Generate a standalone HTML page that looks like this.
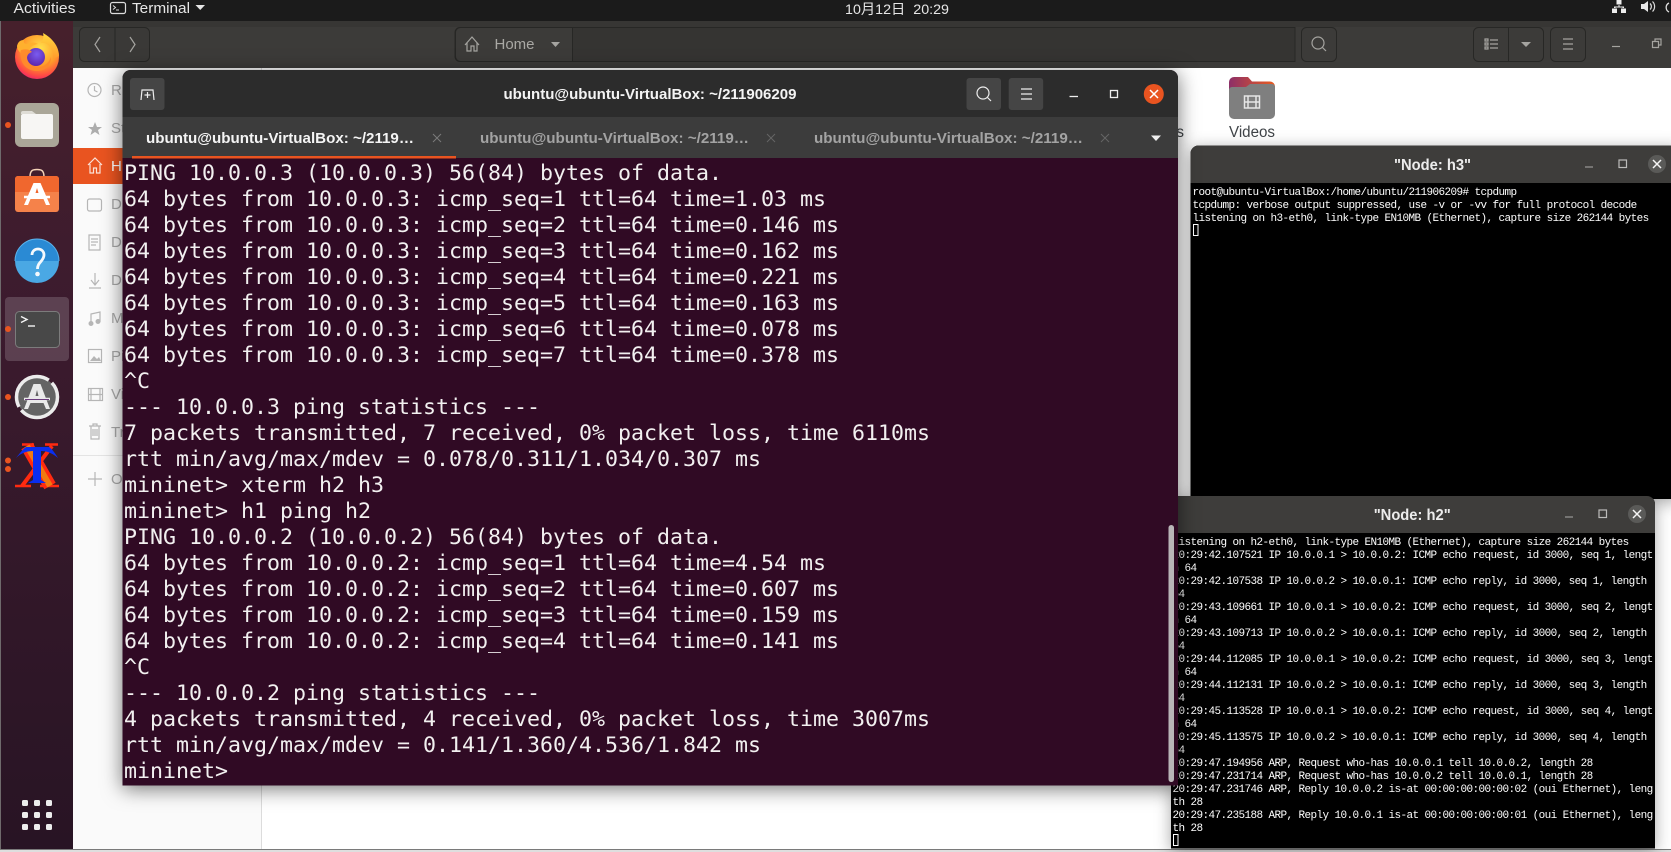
<!DOCTYPE html>
<html>
<head>
<meta charset="utf-8">
<style>
html,body{margin:0;padding:0;width:1671px;height:852px;overflow:hidden;background:#fff}
svg{display:block;position:absolute;left:0;top:0}
text{white-space:pre}
.ui{font-family:"Liberation Sans","Noto Sans CJK SC",sans-serif}
.tm{font-family:"DejaVu Sans Mono",monospace;font-size:21.6px;fill:#f2f0f0}
.xt{font-family:"Liberation Mono",monospace;font-size:11px;letter-spacing:-.6px;fill:#fff}
.side{font-size:15px;fill:#a8a8a8}
</style>
</head>
<body>
<svg width="1671" height="852" viewBox="0 0 1671 852" xmlns="http://www.w3.org/2000/svg">
<defs>
<linearGradient id="dock" x1="0" y1="0" x2="0" y2="1"><stop offset="0" stop-color="#46202c"/><stop offset=".35" stop-color="#3c1b2e"/><stop offset="1" stop-color="#281424"/></linearGradient>
<radialGradient id="ff" cx=".58" cy=".3" r=".8"><stop offset="0" stop-color="#ffe04a"/><stop offset=".5" stop-color="#ff9a2a"/><stop offset=".78" stop-color="#ff4a44"/><stop offset="1" stop-color="#e3127f"/></radialGradient>
<linearGradient id="fl" x1="0" y1="0" x2="0" y2="1"><stop offset="0" stop-color="#ffd83f"/><stop offset="1" stop-color="#ff9a2c"/></linearGradient>
<radialGradient id="pu" cx=".55" cy=".35" r=".7"><stop offset="0" stop-color="#7a5cf0"/><stop offset="1" stop-color="#5b23a8"/></radialGradient>
<linearGradient id="vf" x1="0" y1="0" x2="1" y2="0"><stop offset="0" stop-color="#8c2f68"/><stop offset="1" stop-color="#e95c20"/></linearGradient>
</defs>

<!-- files window base -->
<rect x="0" y="0" width="1671" height="852" fill="#fff"/>
<rect x="73" y="68" width="189" height="781" fill="#fafafa"/>
<rect x="261" y="68" width="1" height="781" fill="#dcdcdc"/>
<rect x="0" y="21" width="1671" height="47" fill="#3c3b39"/>
<rect x="0" y="21" width="1671" height="6" fill="#373634"/>
<rect x="0" y="849" width="1671" height="1" fill="#7a7a7a"/>
<rect x="0" y="850" width="1671" height="2" fill="#dedede"/>

<!-- toolbar -->
<g fill="none" stroke="#272725" stroke-width="1">
<rect x="79.5" y="27.5" width="70" height="34" rx="5" fill="#3a3937"/>
<path d="M115 28V61"/>
<path d="M460 27.5H1295V61.5H460a5 5 0 0 1-5-5V32.5a5 5 0 0 1 5-5z" fill="#353432"/>
<path d="M455.5 32.5a5 5 0 0 1 5-5H572.5V61.5H460.5a5 5 0 0 1-5-5z" fill="#3c3b39"/>
<rect x="1301.5" y="27.5" width="35" height="34" rx="5" fill="#3c3b39"/>
<rect x="1473.5" y="27.5" width="70" height="34" rx="5" fill="#3c3b39"/>
<path d="M1508.5 28V61"/>
<rect x="1550.5" y="27.5" width="35" height="34" rx="5" fill="#3c3b39"/>
</g>
<g fill="none" stroke="#a5a4a0" stroke-width="1.2">
<path d="M100 37L95 44.5L100 52"/><path d="M130 37L135 44.5L130 52"/>
<path d="M465 45L472 37L479 45M467 43V51H471V46H474V51H477V43"/>
<circle cx="1318" cy="43" r="6"/><path d="M1322.5 47.5L1326 51"/>
<path d="M1490 40H1498M1490 44H1498M1490 48H1498M1485 39h3v2h-3zM1485 43h3v2h-3zM1485 47h3v2h-3z"/>
<path d="M1563 39H1573M1563 44H1573M1563 49H1573"/>
<path d="M1612 46.5H1620"/>
<path d="M1652.5 41.5h6v6h-6zM1655 41.5v-2.5h6v6h-2.500"/>
</g>
<path d="M551 42H560L555.500 47z" fill="#a5a4a0"/>
<path d="M1521 42H1531L1526 47z" fill="#a5a4a0"/>
<text class="ui" x="494.500" y="49" font-size="15" fill="#a9a8a4" textLength="40" lengthAdjust="spacingAndGlyphs">Home</text>

<!-- sidebar -->
<rect x="73" y="148" width="60" height="36" fill="#e95420"/>
<g fill="none" stroke="#b6b6b6" stroke-width="1.200">
<circle cx="94.500" cy="90" r="6.500"/><path d="M94.500 86V90.500L97.500 92"/>
<path d="M88 204a2 2 0 0 1 2-2H100a2 2 0 0 1 2 2V212a2 2 0 0 1-2 2H90a2 2 0 0 1-2-2z" transform="translate(-.5 -3)"/>
<path d="M89 235H100V250H89zM91 239H98M91 242H98M91 245H96"/>
<path d="M95 273V285M91 280L95 285L99 280M89 288H101"/>
<path d="M91 324V314L100 312V322"/>
<rect x="88.500" y="349.500" width="13" height="13"/>
<rect x="88.500" y="388.500" width="14" height="12"/><path d="M91 389V400M100 389V400M88 394.500H103"/>
<path d="M89 426H101M91 426V439H99V426M93 426V424H97V426M93 429V436M95 429V436M97 429V436"/>
<path d="M95 472V486M88 479H102"/>
</g>
<path d="M95 122L97 127H102L98 130L99.500 135L95 132L90.500 135L92 130L88 127H93z" fill="#adadad"/>
<circle cx="91" cy="323.500" r="2.500" fill="#b6b6b6"/><circle cx="98" cy="321.500" r="2.500" fill="#b6b6b6"/>
<path d="M90 361L94 356L97 359L99 357L101 361z" fill="#b6b6b6"/>
<path d="M88 165L95 158L102 165M90 164V173H93.500V168H96.500V173H100V164" fill="none" stroke="#fbe2d8" stroke-width="1.200"/>
<rect x="73" y="455" width="189" height="1" fill="#e4e4e4"/>
<g class="ui side">
<text x="111" y="95">Recent</text>
<text x="111" y="133">Starred</text>
<text x="111" y="171" style="fill:#fff">Home</text>
<text x="111" y="209">Desktop</text>
<text x="111" y="247">Documents</text>
<text x="111" y="285">Downloads</text>
<text x="111" y="323">Music</text>
<text x="111" y="361">Pictures</text>
<text x="111" y="399">Videos</text>
<text x="111" y="437">Trash</text>
<text x="111" y="484">Other Locations</text>
</g>

<!-- videos folder -->
<path d="M1229 82a5 5 0 0 1 5-5H1248l4 4.500H1270a5 5 0 0 1 5 5V100H1229z" fill="url(#vf)"/>
<path d="M1229 90a3 3 0 0 1 3-3H1246l4-3H1272a3 3 0 0 1 3 3V114a5 5 0 0 1-5 5H1234a5 5 0 0 1-5-5z" fill="#7f7f7f"/>
<g fill="none" stroke="#e6e6e6" stroke-width="1.500"><rect x="1244.500" y="96" width="15" height="12"/><path d="M1248 96V108M1256 96V108M1244 102H1260"/></g>
<text class="ui" x="1229" y="137" font-size="15.500" fill="#3f4347" textLength="46" lengthAdjust="spacingAndGlyphs">Videos</text>
<text class="ui" x="1184" y="137" font-size="15.500" fill="#3f4347" text-anchor="end">Pictures</text>

<!-- top bar -->
<rect x="0" y="0" width="1671" height="21" fill="#1b1b1b"/>
<g class="ui" font-size="15" fill="#e6e6e6">
<text x="13.500" y="13" textLength="62" lengthAdjust="spacingAndGlyphs">Activities</text>
<text x="132" y="13" textLength="58" lengthAdjust="spacingAndGlyphs">Terminal</text>
<text x="845" y="14" font-size="14" textLength="104" lengthAdjust="spacingAndGlyphs">10月12日  20:29</text>
</g>
<rect x="110.500" y="2.500" width="15" height="11" rx="2" fill="none" stroke="#ddd" stroke-width="1.200"/>
<path d="M113 5.500L115.500 7.500L113 9.500M116 10H119" fill="none" stroke="#ddd"/>
<path d="M195.500 5H205L200.250 10z" fill="#e6e6e6"/>
<path d="M1616.500 0H1621.500V4.500H1616.500zM1612 8.500H1617V13H1612zM1621 8.500H1626V13H1621zM1618.500 4V6.500H1614V9H1615.500V7.500H1622.500V9H1624V6.500H1619.500V4z" fill="#eee"/>
<path d="M1641 4H1644L1648 1V12L1644 9H1641z" fill="#e8e8e8"/>
<path d="M1650 3.500a4 4 0 0 1 0 6M1652.500 1.500a7 7 0 0 1 0 10" fill="none" stroke="#ddd" stroke-width="1.200"/>
<path d="M1669 3a5 5 0 0 0 0 9" fill="none" stroke="#ddd" stroke-width="1.300"/>

<!-- node h3 -->
<g style="filter:drop-shadow(0 3px 8px rgba(0,0,0,.35))">
<path d="M1190.500 499V153.500a8 8 0 0 1 8-8H1680V499z" fill="#000"/>
<path d="M1190.500 183V153.500a8 8 0 0 1 8-8H1680V183z" fill="#3e3d3b"/>
</g>
<text class="ui" x="1394" y="170" font-size="16" font-weight="bold" fill="#ececec" textLength="77" lengthAdjust="spacingAndGlyphs">"Node: h3"</text>
<path d="M1585 167H1593" stroke="#9a9a98" stroke-width="1.200"/>
<rect x="1619" y="160" width="7.500" height="7.500" fill="none" stroke="#bcbcba" stroke-width="1.200"/>
<circle cx="1657" cy="164" r="9" fill="#5a5a58"/>
<path d="M1653 160L1661 168M1661 160L1653 168" stroke="#f5f5f5" stroke-width="1.500"/>
<g class="xt">
<text x="1192.500" y="195">root@ubuntu-VirtualBox:/home/ubuntu/211906209# tcpdump</text>
<text x="1192.500" y="208">tcpdump: verbose output suppressed, use -v or -vv for full protocol decode</text>
<text x="1192.500" y="221">listening on h3-eth0, link-type EN10MB (Ethernet), capture size 262144 bytes</text>
</g>
<rect x="1193.500" y="224.500" width="4.500" height="11" fill="none" stroke="#fff"/>

<!-- node h2 -->
<g style="filter:drop-shadow(0 3px 8px rgba(0,0,0,.35))">
<path d="M1171 848.500V504a8 8 0 0 1 8-8H1647a8 8 0 0 1 8 8V848.500z" fill="#000"/>
<path d="M1171 533V504a8 8 0 0 1 8-8H1647a8 8 0 0 1 8 8V533z" fill="#3e3d3b"/>
</g>
<text class="ui" x="1373.700" y="520" font-size="16" font-weight="bold" fill="#ececec" textLength="77" lengthAdjust="spacingAndGlyphs">"Node: h2"</text>
<path d="M1565 517H1573" stroke="#9a9a98" stroke-width="1.200"/>
<rect x="1599" y="510" width="7.500" height="7.500" fill="none" stroke="#bcbcba" stroke-width="1.200"/>
<circle cx="1637" cy="514" r="9" fill="#5a5a58"/>
<path d="M1633 510L1641 518M1641 510L1633 518" stroke="#f5f5f5" stroke-width="1.500"/>
<g class="xt">
<text x="1172.500" y="545">listening on h2-eth0, link-type EN10MB (Ethernet), capture size 262144 bytes</text>
<text x="1172.500" y="558">20:29:42.107521 IP 10.0.0.1 &gt; 10.0.0.2: ICMP echo request, id 3000, seq 1, lengt</text>
<text x="1172.500" y="571">h 64</text>
<text x="1172.500" y="584">20:29:42.107538 IP 10.0.0.2 &gt; 10.0.0.1: ICMP echo reply, id 3000, seq 1, length</text>
<text x="1172.500" y="597">64</text>
<text x="1172.500" y="610">20:29:43.109661 IP 10.0.0.1 &gt; 10.0.0.2: ICMP echo request, id 3000, seq 2, lengt</text>
<text x="1172.500" y="623">h 64</text>
<text x="1172.500" y="636">20:29:43.109713 IP 10.0.0.2 &gt; 10.0.0.1: ICMP echo reply, id 3000, seq 2, length</text>
<text x="1172.500" y="649">64</text>
<text x="1172.500" y="662">20:29:44.112085 IP 10.0.0.1 &gt; 10.0.0.2: ICMP echo request, id 3000, seq 3, lengt</text>
<text x="1172.500" y="675">h 64</text>
<text x="1172.500" y="688">20:29:44.112131 IP 10.0.0.2 &gt; 10.0.0.1: ICMP echo reply, id 3000, seq 3, length</text>
<text x="1172.500" y="701">64</text>
<text x="1172.500" y="714">20:29:45.113528 IP 10.0.0.1 &gt; 10.0.0.2: ICMP echo request, id 3000, seq 4, lengt</text>
<text x="1172.500" y="727">h 64</text>
<text x="1172.500" y="740">20:29:45.113575 IP 10.0.0.2 &gt; 10.0.0.1: ICMP echo reply, id 3000, seq 4, length</text>
<text x="1172.500" y="753">64</text>
<text x="1172.500" y="766">20:29:47.194956 ARP, Request who-has 10.0.0.1 tell 10.0.0.2, length 28</text>
<text x="1172.500" y="779">20:29:47.231714 ARP, Request who-has 10.0.0.2 tell 10.0.0.1, length 28</text>
<text x="1172.500" y="792">20:29:47.231746 ARP, Reply 10.0.0.2 is-at 00:00:00:00:00:02 (oui Ethernet), leng</text>
<text x="1172.500" y="805">th 28</text>
<text x="1172.500" y="818">20:29:47.235188 ARP, Reply 10.0.0.1 is-at 00:00:00:00:00:01 (oui Ethernet), leng</text>
<text x="1172.500" y="831">th 28</text>
</g>
<rect x="1173.500" y="834.500" width="4.500" height="11" fill="none" stroke="#fff"/>

<!-- main terminal -->
<g style="filter:drop-shadow(0 3px 10px rgba(0,0,0,.55))">
<path d="M122.500 785.500V78a8 8 0 0 1 8-8H1170a8 8 0 0 1 8 8V785.500z" fill="#300a24"/>
</g>
<path d="M122.500 117V78a8 8 0 0 1 8-8H1170a8 8 0 0 1 8 8V117z" fill="#2c2c2c"/>
<rect x="122.500" y="117" width="1055.500" height="41" fill="#3c3c3c"/>
<rect x="132" y="156" width="324" height="2.500" fill="#e95420"/>
<rect x="130" y="78" width="34.500" height="32" rx="3" fill="#454545"/>
<path d="M141 100L142 90H153L154 100M147.500 92V98M144.500 95H150.500" fill="none" stroke="#eee" stroke-width="1.200"/>
<rect x="966.500" y="78" width="34.500" height="32" rx="3" fill="#454545"/>
<circle cx="983" cy="93" r="6" fill="none" stroke="#eee" stroke-width="1.200"/><path d="M987.500 97.500L991 101" stroke="#eee" stroke-width="1.200"/>
<rect x="1008.700" y="78" width="34.500" height="32" rx="3" fill="#454545"/>
<path d="M1021 89H1032M1021 94H1032M1021 99H1032" stroke="#eee" stroke-width="1.200"/>
<path d="M1069.500 96.500H1078" stroke="#eee" stroke-width="1.300"/>
<rect x="1110.500" y="90.500" width="7" height="7" fill="none" stroke="#eee" stroke-width="1.300"/>
<circle cx="1153.800" cy="94" r="10" fill="#e95420"/>
<path d="M1150 90L1158 98M1158 90L1150 98" stroke="#fff" stroke-width="1.500"/>
<g class="ui" font-weight="bold">
<text x="503.500" y="99" font-size="15" fill="#f4f4f4" textLength="293" lengthAdjust="spacingAndGlyphs">ubuntu@ubuntu-VirtualBox: ~/211906209</text>
<text x="146" y="143" font-size="15" fill="#f4f4f4" textLength="268" lengthAdjust="spacingAndGlyphs">ubuntu@ubuntu-VirtualBox: ~/2119…</text>
<text x="480" y="143" font-size="15" fill="#a3a3a3" textLength="269" lengthAdjust="spacingAndGlyphs">ubuntu@ubuntu-VirtualBox: ~/2119…</text>
<text x="814" y="143" font-size="15" fill="#a3a3a3" textLength="269" lengthAdjust="spacingAndGlyphs">ubuntu@ubuntu-VirtualBox: ~/2119…</text>
</g>
<path d="M433 134L441 142M441 134L433 142" stroke="#7b7b7b" stroke-width="1"/>
<path d="M767 134L775 142M775 134L767 142M1101 134L1109 142M1109 134L1101 142" stroke="#666" stroke-width="1"/>
<path d="M1151 135.500H1161L1156 141z" fill="#eee"/>
<g class="tm">
<text x="124" y="180">PING 10.0.0.3 (10.0.0.3) 56(84) bytes of data.</text>
<text x="124" y="206">64 bytes from 10.0.0.3: icmp_seq=1 ttl=64 time=1.03 ms</text>
<text x="124" y="232">64 bytes from 10.0.0.3: icmp_seq=2 ttl=64 time=0.146 ms</text>
<text x="124" y="258">64 bytes from 10.0.0.3: icmp_seq=3 ttl=64 time=0.162 ms</text>
<text x="124" y="284">64 bytes from 10.0.0.3: icmp_seq=4 ttl=64 time=0.221 ms</text>
<text x="124" y="310">64 bytes from 10.0.0.3: icmp_seq=5 ttl=64 time=0.163 ms</text>
<text x="124" y="336">64 bytes from 10.0.0.3: icmp_seq=6 ttl=64 time=0.078 ms</text>
<text x="124" y="362">64 bytes from 10.0.0.3: icmp_seq=7 ttl=64 time=0.378 ms</text>
<text x="124" y="388">^C</text>
<text x="124" y="414">--- 10.0.0.3 ping statistics ---</text>
<text x="124" y="440">7 packets transmitted, 7 received, 0% packet loss, time 6110ms</text>
<text x="124" y="466">rtt min/avg/max/mdev = 0.078/0.311/1.034/0.307 ms</text>
<text x="124" y="492">mininet&gt; xterm h2 h3</text>
<text x="124" y="518">mininet&gt; h1 ping h2</text>
<text x="124" y="544">PING 10.0.0.2 (10.0.0.2) 56(84) bytes of data.</text>
<text x="124" y="570">64 bytes from 10.0.0.2: icmp_seq=1 ttl=64 time=4.54 ms</text>
<text x="124" y="596">64 bytes from 10.0.0.2: icmp_seq=2 ttl=64 time=0.607 ms</text>
<text x="124" y="622">64 bytes from 10.0.0.2: icmp_seq=3 ttl=64 time=0.159 ms</text>
<text x="124" y="648">64 bytes from 10.0.0.2: icmp_seq=4 ttl=64 time=0.141 ms</text>
<text x="124" y="674">^C</text>
<text x="124" y="700">--- 10.0.0.2 ping statistics ---</text>
<text x="124" y="726">4 packets transmitted, 4 received, 0% packet loss, time 3007ms</text>
<text x="124" y="752">rtt min/avg/max/mdev = 0.141/1.360/4.536/1.842 ms</text>
<text x="124" y="778">mininet&gt;</text>
</g>
<rect x="1168.500" y="525" width="5.500" height="257" rx="2.700" fill="#b9b5b7"/>

<!-- dock -->
<rect x="0" y="21" width="73" height="828" fill="url(#dock)"/>
<rect x="0" y="21" width="1" height="828" fill="#6f6a6c"/>
<rect x="5" y="297" width="64" height="64" rx="4" fill="#fff" fill-opacity=".17"/>
<!-- firefox -->
<circle cx="37" cy="57" r="22" fill="url(#ff)"/>
<path d="M43 33C44 37 43 40 41 43C48 42 54 49 53 59L59 56C59 46 52 38 43 33z" fill="url(#fl)"/>
<path d="M17 46C18 42 20 40 24 40C23 43 25 44 27 44C31 42 35 42 38 44C33 45 30 47 29 50C25 50 22 52 22 55C20 52 17 50 17 46z" fill="#ffb02e"/>
<circle cx="36" cy="57" r="9" fill="url(#pu)"/>
<path d="M21 50C26 49 29 49 32 52C29 53 27 55 27 58C27 63 32 67 38 67C44 67 49 63 51 57C51 66 45 71 37 71C29 71 22 66 21 58C20 55 20 52 21 50z" fill="#ff8a2b" opacity=".95"/>
<!-- files -->
<rect x="15" y="103" width="44" height="44" rx="6" fill="#aaa698"/>
<path d="M21 113a2 2 0 0 1 2-2H32L36 114H21z" fill="#dfddd6"/>
<path d="M21 116a2 2 0 0 1 2-2H51a2 2 0 0 1 2 2V137a2 2 0 0 1-2 2H23a2 2 0 0 1-2-2z" fill="#f7f6f4"/>
<circle cx="8" cy="125" r="3" fill="#e95420"/>
<!-- software -->
<path d="M30 177C30 170 33 169.500 37 169.500C41 169.500 44 170 44 177" fill="none" stroke="#f4d3b8" stroke-width="1.500"/>
<rect x="15" y="176" width="44" height="36" rx="3" fill="#f5824a"/>
<path d="M15 192V179a3 3 0 0 1 3-3H56a3 3 0 0 1 3 3V192z" fill="#f0672e"/>
<path d="M33.500 183H40.500L50 205H46L43.500 199H30.500L28 205H24z" fill="#fff"/><path d="M35.500 193H38.500L37 188z" fill="#f0672e"/>
<path d="M24 197H50" stroke="#fff" stroke-width="2.500"/>
<!-- help -->
<circle cx="37" cy="261" r="22" fill="#4aa8e4"/>
<path d="M15 261a22 22 0 0 1 44 0z" fill="#2a8ad4"/>
<path d="M15 261a22 22 0 0 1 44 0" fill="none" stroke="#5cb2ea" stroke-width="1"/>
<path d="M32 255C32 247 44 247 44 255C44 261 37.500 262 37.500 269" fill="none" stroke="#f4f9fd" stroke-width="2.800"/>
<circle cx="37.500" cy="274" r="2.300" fill="#f4f9fd"/>
<!-- terminal icon -->
<rect x="15.500" y="311.500" width="44" height="36" rx="4" fill="#484848" stroke="#7c7c7c"/>
<path d="M21 316.500L27 319.500L21 322.500" fill="none" stroke="#f4f4f4" stroke-width="1.400"/>
<path d="M28 326H35" stroke="#f4f4f4" stroke-width="1.400"/>
<circle cx="8" cy="329" r="3" fill="#e95420"/>
<!-- updater -->
<circle cx="37" cy="397" r="20" fill="#646464"/>
<circle cx="37" cy="397" r="20.500" fill="none" stroke="#ececec" stroke-width="3.500" stroke-dasharray="50 4 55 4"/>
<path d="M33.500 384H40.500L50 409H46L43.500 403H30.500L28 409H24z" fill="#e9e9e9"/><path d="M35.500 396H38.500L37 390z" fill="#646464"/>
<path d="M24 399H50" stroke="#e9e9e9" stroke-width="2.500"/><path d="M25 399.500H49" stroke="#6a3a7c" stroke-width="1"/>
<circle cx="8" cy="397" r="3" fill="#e95420"/>
<!-- xterm X -->
<path d="M22 444.500H34M45 444.500H58M15 486H31M40 486H59" stroke="#ff2a10" stroke-width="2.500"/>
<path d="M27 446L50 486" stroke="#ff2a10" stroke-width="13"/>
<path d="M27 446L50 486" stroke="#f07a10" stroke-width="6"/>
<path d="M52 446L22 486" stroke="#ff2a10" stroke-width="4"/>
<path d="M16 458C20 453 23 449 26 447H49C52 449 55 453 58 458C52 453 47 451 41 451V480L46 483H28L33 480V451C27 451 21 453 16 458z" fill="#0a2ef0"/>
<circle cx="8" cy="460.500" r="3" fill="#e95420"/><circle cx="8" cy="469" r="3" fill="#e95420"/>
<!-- app grid -->
<g fill="#ededed">
<rect x="22" y="800" width="6" height="6" rx="1.500"/><rect x="34" y="800" width="6" height="6" rx="1.500"/><rect x="46" y="800" width="6" height="6" rx="1.500"/>
<rect x="22" y="812" width="6" height="6" rx="1.500"/><rect x="34" y="812" width="6" height="6" rx="1.500"/><rect x="46" y="812" width="6" height="6" rx="1.500"/>
<rect x="22" y="824" width="6" height="6" rx="1.500"/><rect x="34" y="824" width="6" height="6" rx="1.500"/><rect x="46" y="824" width="6" height="6" rx="1.500"/>
</g>
</svg>
</body>
</html>
